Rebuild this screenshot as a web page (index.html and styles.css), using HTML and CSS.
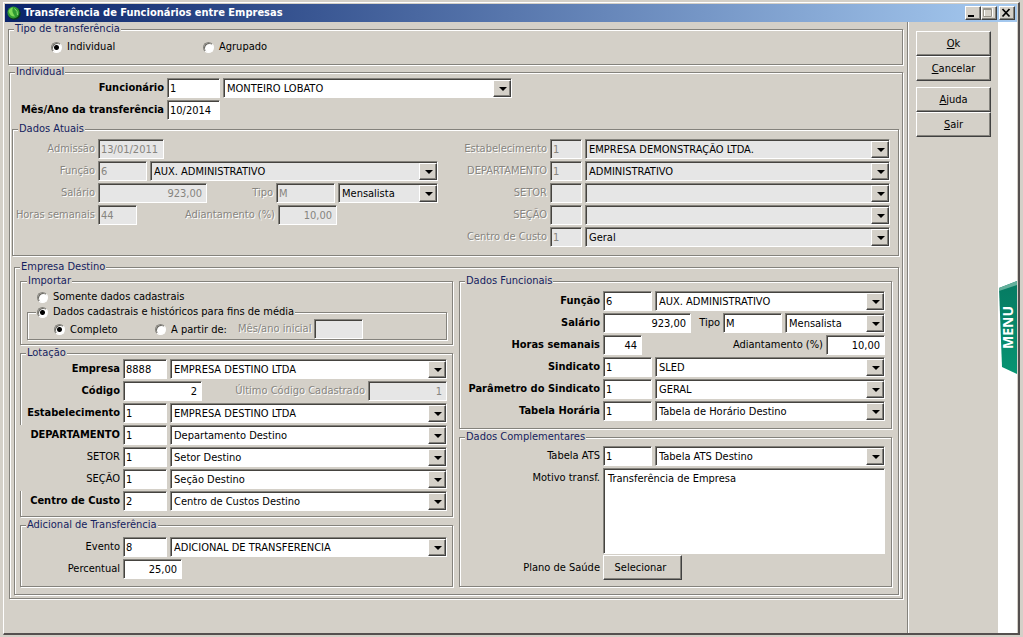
FILE: index.html
```
<!DOCTYPE html>
<html lang="pt-BR">
<head>
<meta charset="utf-8">
<title>Transferência de Funcionários entre Empresas</title>
<link rel="stylesheet" href="styles.css">
</head>
<body>
<div class="window">
  <header class="titlebar">
    <svg class="app-icon" viewBox="0 0 14 14" aria-hidden="true">
      <ellipse cx="7.400" cy="7.600" rx="6.400" ry="6.200" fill="#0b3b1c"/>
      <ellipse cx="6.400" cy="6.600" rx="6" ry="6" fill="#2f9a32"/>
      <path d="M1.500 5Q3 1.500 6 1.500Q4 5 8 10.500Q3 11 1.500 5Z" fill="#7ed957"/>
      <path d="M7.500 2.500Q11 5 10.500 9" fill="none" stroke="#8fdc74" stroke-width="1"/>
    </svg>
    <h1 class="title">Transferência de Funcionários entre Empresas</h1>
    <div class="window-buttons">
      <button class="winbtn" aria-label="Minimizar"><svg viewBox="0 0 12 10"><path d="M2 7h6v2H2z" fill="#000"/></svg></button>
      <button class="winbtn" aria-label="Maximizar"><svg viewBox="0 0 12 10"><path d="M2.500 .5h8v8h-8zM2.500 1.500h8" fill="none" stroke="#fff"/><path d="M1.500 .5h8v8h-8zM1.500 1.500h8" fill="none" stroke="#98958c"/></svg></button>
      <button class="winbtn close" aria-label="Fechar"><svg viewBox="0 0 12 10"><path d="M2.500 1l7 7.500M9.500 1l-7 7.500" stroke="#000" stroke-width="1.800"/></svg></button>
    </div>
  </header>
  <div class="body">
    <main class="form">
      <fieldset class="group tipo">
        <legend>Tipo de transferência</legend>
        <div class="options">
          <label class="radio first"><input type="radio" name="tipo" checked>Individual</label>
          <label class="radio"><input type="radio" name="tipo">Agrupado</label>
        </div>
      </fieldset>

      <fieldset class="group individual">
        <legend>Individual</legend>
        <div class="rows lab-xl top-rows">
          <div class="row"><label class="strong" for="func">Funcionário</label><input id="func" class="w-md" value="1"><span class="combo person"><select aria-label="Nome do funcionário"><option>MONTEIRO LOBATO</option></select></span></div>
          <div class="row"><label class="strong" for="mes">Mês/Ano da transferência</label><input id="mes" class="w-md" value="10/2014"></div>
        </div>

        <fieldset class="group atuais">
          <legend>Dados Atuais</legend>
          <div class="rows lab-sm">
            <div class="row"><label class="off" for="adm">Admissão</label><input id="adm" class="w-date" value="13/01/2011" disabled></div>
            <div class="row"><label class="off" for="fa">Função</label><input id="fa" class="w-code" value="6" disabled><span class="combo"><select disabled aria-label="Descrição da função"><option>AUX. ADMINISTRATIVO</option></select></span></div>
            <div class="row"><label class="off" for="sa">Salário</label><input id="sa" class="w-money-lg num" value="923,00" disabled><label class="off tail" for="ta">Tipo</label><input id="ta" class="w-type" value="M" disabled><span class="combo period"><select disabled aria-label="Tipo de salário"><option>Mensalista</option></select></span></div>
            <div class="row"><label class="off" for="ha">Horas semanais</label><input id="ha" class="w-hours" value="44" disabled><label class="off tail" for="aa">Adiantamento (%)</label><input id="aa" class="w-type num under-type" value="10,00" disabled></div>
          </div>
          <div class="rows lab-md">
            <div class="row"><label class="off" for="ea">Estabelecimento</label><input id="ea" class="w-tiny" value="1" disabled><span class="combo"><select disabled aria-label="Nome do estabelecimento"><option>EMPRESA DEMONSTRAÇÃO LTDA.</option></select></span></div>
            <div class="row"><label class="off" for="da">DEPARTAMENTO</label><input id="da" class="w-tiny" value="1" disabled><span class="combo"><select disabled aria-label="Nome do departamento"><option>ADMINISTRATIVO</option></select></span></div>
            <div class="row"><label class="off" for="sea">SETOR</label><input id="sea" class="w-tiny" disabled><span class="combo"><select disabled aria-label="Nome do setor"><option></option></select></span></div>
            <div class="row"><label class="off" for="sca">SEÇÃO</label><input id="sca" class="w-tiny" disabled><span class="combo"><select disabled aria-label="Nome da seção"><option></option></select></span></div>
            <div class="row"><label class="off" for="ca">Centro de Custo</label><input id="ca" class="w-tiny" value="1" disabled><span class="combo"><select disabled aria-label="Nome do centro de custo"><option>Geral</option></select></span></div>
          </div>
        </fieldset>

        <fieldset class="group destino">
          <legend>Empresa Destino</legend>
          <div class="column">
            <fieldset class="group importar">
              <legend>Importar</legend>
              <label class="radio"><input type="radio" name="importar">Somente dados cadastrais</label>
              <fieldset class="group historico">
                <legend><label class="radio"><input type="radio" name="importar" checked>Dados cadastrais e históricos para fins de média</label></legend>
                <div class="row">
                  <label class="radio full"><input type="radio" name="alcance" checked>Completo</label>
                  <label class="radio from"><input type="radio" name="alcance">A partir de:</label>
                  <label class="off" for="mi">Mês/ano inicial</label><input id="mi" class="w-code" disabled>
                </div>
              </fieldset>
            </fieldset>

            <fieldset class="group lotacao">
              <legend>Lotação</legend>
              <div class="rows lab-lg">
                <div class="row"><label class="strong" for="el">Empresa</label><input id="el" class="w-sm" value="8888"><span class="combo"><select aria-label="Nome da empresa"><option>EMPRESA DESTINO LTDA</option></select></span></div>
                <div class="row"><label class="strong" for="cl">Código</label><input id="cl" class="w-num num" value="2"><label class="off tail" for="ul">Último Código Cadastrado</label><input id="ul" class="w-num num" value="1" disabled></div>
                <div class="row"><label class="strong" for="esl">Estabelecimento</label><input id="esl" class="w-sm" value="1"><span class="combo"><select aria-label="Nome do estabelecimento de destino"><option>EMPRESA DESTINO LTDA</option></select></span></div>
                <div class="row"><label class="strong wide" for="dl">DEPARTAMENTO</label><input id="dl" class="w-sm" value="1"><span class="combo"><select aria-label="Nome do departamento de destino"><option>Departamento Destino</option></select></span></div>
                <div class="row"><label class="wide" for="stl">SETOR</label><input id="stl" class="w-sm" value="1"><span class="combo"><select aria-label="Nome do setor de destino"><option>Setor Destino</option></select></span></div>
                <div class="row"><label class="wide" for="scl">SEÇÃO</label><input id="scl" class="w-sm" value="1"><span class="combo"><select aria-label="Nome da seção de destino"><option>Seção Destino</option></select></span></div>
                <div class="row"><label class="strong" for="ccl">Centro de Custo</label><input id="ccl" class="w-sm" value="2"><span class="combo"><select aria-label="Nome do centro de custo de destino"><option>Centro de Custos Destino</option></select></span></div>
              </div>
            </fieldset>

            <fieldset class="group adicional">
              <legend>Adicional de Transferência</legend>
              <div class="rows lab-lg">
                <div class="row"><label for="ev">Evento</label><input id="ev" class="w-sm" value="8"><span class="combo"><select aria-label="Descrição do evento"><option>ADICIONAL DE TRANSFERENCIA</option></select></span></div>
                <div class="row"><label for="pe">Percentual</label><input id="pe" class="w-type num" value="25,00"></div>
              </div>
            </fieldset>
          </div>

          <div class="column">
            <fieldset class="group funcionais">
              <legend>Dados Funcionais</legend>
              <div class="rows lab-xl">
                <div class="row"><label class="strong" for="fd">Função</label><input id="fd" class="w-code" value="6"><span class="combo"><select aria-label="Descrição da nova função"><option>AUX. ADMINISTRATIVO</option></select></span></div>
                <div class="row"><label class="strong" for="sd">Salário</label><input id="sd" class="w-money num" value="923,00"><label class="tail" for="td">Tipo</label><input id="td" class="w-type" value="M"><span class="combo period"><select aria-label="Novo tipo de salário"><option>Mensalista</option></select></span></div>
                <div class="row"><label class="strong" for="hd">Horas semanais</label><input id="hd" class="w-hours num" value="44"><label class="tail" for="ad">Adiantamento (%)</label><input id="ad" class="w-type num" value="10,00"></div>
                <div class="row"><label class="strong" for="si">Sindicato</label><input id="si" class="w-code" value="1"><span class="combo"><select aria-label="Nome do sindicato"><option>SLED</option></select></span></div>
                <div class="row"><label class="strong" for="ps">Parâmetro do Sindicato</label><input id="ps" class="w-code" value="1"><span class="combo"><select aria-label="Nome do parâmetro"><option>GERAL</option></select></span></div>
                <div class="row"><label class="strong" for="th">Tabela Horária</label><input id="th" class="w-code" value="1"><span class="combo"><select aria-label="Nome da tabela horária"><option>Tabela de Horário Destino</option></select></span></div>
              </div>
            </fieldset>

            <fieldset class="group complementares">
              <legend>Dados Complementares</legend>
              <div class="rows lab-xl">
                <div class="row"><label for="ats">Tabela ATS</label><input id="ats" class="w-code" value="1"><span class="combo"><select aria-label="Nome da tabela ATS"><option>Tabela ATS Destino</option></select></span></div>
                <div class="row memo"><label for="mo">Motivo transf.</label><textarea id="mo">Transferência de Empresa</textarea></div>
                <div class="row action"><label for="pl">Plano de Saúde</label><button id="pl" class="btn select-btn">Selecionar</button></div>
              </div>
            </fieldset>
          </div>
        </fieldset>
      </fieldset>
    </main>

    <aside class="side">
      <div class="btn-pair">
        <button class="btn"><span><u>O</u>k</span></button>
        <button class="btn"><span><u>C</u>ancelar</span></button>
      </div>
      <div class="btn-pair">
        <button class="btn"><span><u>A</u>juda</span></button>
        <button class="btn"><span><u>S</u>air</span></button>
      </div>
    </aside>

    <nav class="strip">
      <button class="menu-tab">
        <svg viewBox="0 0 18 93" preserveAspectRatio="none" aria-hidden="true">
          <defs><linearGradient id="teal" x1="0" y1="0" x2="0" y2="1"><stop offset="0" stop-color="#067a62"/><stop offset="1" stop-color="#079472"/></linearGradient></defs>
          <path d="M0 7L18 0V93L3 86Z" fill="url(#teal)"/>
          <path d="M0 7L18 0V4L0 10Z" fill="#64b09c"/>
        </svg>
        <span>MENU</span>
      </button>
    </nav>
  </div>
</div>
</body>
</html>
```
FILE: styles.css
```
:root {
  --face: #d4d0c8;
  --shade: #84827c;
  --dark: #45433f;
  --navy: #14225f;
  --off: #878580;
}

* { box-sizing: border-box; }

body {
  margin: 0;
  background: var(--face);
  color: #000;
  font: 11px/14px "DejaVu Sans Condensed", "DejaVu Sans", sans-serif;
}

button, input, select, textarea { font: inherit; color: inherit; margin: 0; border-radius: 0; }

/* window frame */
.window {
  display: flex;
  flex-direction: column;
  min-height: calc(100vh - 4px);
  margin: 2px 3px 2px 3px;
  padding: 1px 1px 0 1px;
  border: solid;
  border-width: 1px 2px 2px 1px;
  border-color: #fff #55504f #55504f #fff;
}

.titlebar {
  display: flex;
  align-items: center;
  height: 18px;
  padding: 0 2px 0 2px;
  background: linear-gradient(90deg, #0a246a, #a6caf0);
}

.app-icon { width: 14px; height: 14px; margin-right: 3px; }

.title { flex: 1; margin: 0; color: #fff; font-size: 11px; line-height: 14px; font-weight: bold; }

.window-buttons { display: flex; }

.winbtn {
  width: 16px;
  height: 14px;
  padding: 0;
  background: var(--face);
  border: 1px solid;
  border-color: #fff #404040 #404040 #fff;
  box-shadow: inset -1px -1px 0 var(--shade);
}

.winbtn svg { display: block; width: 12px; height: 10px; }
.winbtn.close { margin-left: 2px; }

.body { flex: 1; display: flex; }

.form { flex: 1; min-width: 0; padding: 1px 4px 4px 3px; }

/* group boxes */
.group {
  min-width: 0;
  margin: 0;
  padding: 0;
  border: 1px solid var(--shade);
  box-shadow: inset 1px 1px 0 #fff, 1px 1px 0 #fff;
}

.group > legend {
  height: 12px;
  margin-left: 5px;
  padding: 0 1px;
  background: var(--face);
  color: var(--navy);
  line-height: 12px;
}

.tipo { padding: 5px 0 10px; }
.options { display: flex; padding-left: 42px; }
.options .first { width: 152px; }

.individual { margin: 1px 0 0 1px; padding: 0 3px 3px 2px; }
.individual > legend { margin-left: 3px; }
.top-rows { width: 501px; padding-left: 2px; }
.person { max-width: 289px; }

.atuais {
  display: grid;
  grid-template-columns: minmax(0, 425fr) minmax(0, 433fr);
  gap: 19px;
  margin-top: 3px;
  padding: 4px 8px 8px 0;
}

.destino {
  display: grid;
  grid-template-columns: minmax(0, 1fr) minmax(0, 1fr);
  gap: 6px;
  margin: 5px 0 0 2px;
  padding: 2px 6px 7px 5px;
}

.destino > legend, .importar > legend { margin-left: 0; }

.column { display: flex; flex-direction: column; gap: 2px; }

.importar { padding: 3px 5px 4px 6px; }
.importar > .radio { padding-left: 10px; }
.historico { margin-top: 2px; padding: 1px 0 0; }
.group.historico > legend { margin-left: 8px; color: #000; }
.historico .radio { height: 12px; }
.historico .row .radio { height: 20px; }
.historico .full { width: 98px; margin-left: 26px; }
.historico .from { width: 80px; }

.lotacao { padding: 0 5px 5px 0; }
.adicional { padding: 6px 5px 7px 0; }
.funcionais { padding: 4px 6px 7px 0; }
.complementares { padding: 3px 6px 6px 0; }

/* rows */
.rows { display: flex; flex-direction: column; gap: 2px; }
.row { display: flex; gap: 3px; min-height: 20px; }
.row > label { line-height: 19px; white-space: nowrap; }
.rows .row > label:first-child { flex: none; text-align: right; }
.lab-sm .row > label:first-child { width: 82px; }
.lab-md .row > label:first-child { width: 90px; }
.lab-lg .row > label:first-child { width: 99px; }
.lab-xl .row > label:first-child { width: 140px; }
.top-rows .row > label:first-child { width: 150px; }
.row > .tail { flex: 1; text-align: right; }
.strong { font-weight: bold; }
.off { color: var(--off); text-shadow: 1px 1px 0 #fff; }

/* long captions that run over the group border */
.lab-lg .row > .wide:first-child {
  width: 102px;
  height: 22px;
  margin: 0 0 -2px -3px;
  background: var(--face);
  z-index: 1;
}

/* text boxes and combos */
.row > input, select, textarea {
  height: 20px;
  padding: 0 2px;
  background: #fff;
  border: 1px solid;
  border-color: var(--shade) #fff #fff var(--shade);
  box-shadow: inset 1px 1px 0 var(--dark);
  outline: 0;
}

.row > input { flex: none; }
.row > input:disabled { background: #e6e6e6; color: var(--off); }
.num { text-align: right; }
.row > .num { padding-right: 4px; }

.w-tiny { width: 32px; }
.w-hours { width: 39px; }
.w-sm { width: 44px; }
.w-code { width: 49px; }
.w-md { width: 53px; }
.w-type { width: 59px; }
.w-date { width: 66px; }
.w-num { width: 79px; }
.w-money { width: 88px; }
.w-money-lg { width: 109px; }
.under-type { margin-right: 101px; }

.combo { position: relative; flex: 1; min-width: 0; }
.row > .period { flex: none; width: 100px; }

select {
  display: block;
  width: 100%;
  padding: 1px 18px 0 3px;
  appearance: none;
}

select:disabled { background: #e6e6e6; color: #000; opacity: 1; }

.combo::before {
  content: "";
  position: absolute;
  top: 2px;
  right: 1px;
  bottom: 1px;
  width: 16px;
  background: var(--face);
  border: 1px solid;
  border-color: #fff #404040 #404040 #fff;
  box-shadow: inset -1px -1px 0 var(--shade);
  pointer-events: none;
}

.combo::after {
  content: "";
  position: absolute;
  top: 9px;
  right: 5px;
  border: 4px solid transparent;
  border-top-color: #000;
  border-bottom: 0;
  pointer-events: none;
}

textarea { flex: 1; min-width: 0; height: 86px; padding: 3px 4px; resize: none; }
.action { margin-top: -1px; }
.action > label { padding-top: 3px; }

/* radios */
.radio { display: flex; align-items: center; gap: 5px; height: 14px; white-space: nowrap; }

.radio input {
  flex: none;
  width: 11px;
  height: 11px;
  appearance: none;
  border: 1px solid;
  border-color: var(--shade) #fff #fff var(--shade);
  border-radius: 50%;
  background: #fff;
  box-shadow: inset 1px 1px 0 #6b6963;
}

.radio input:checked { background: radial-gradient(circle, #000 2px, #fff 3px); }

/* buttons */
.btn {
  height: 25px;
  padding: 0;
  background: var(--face);
  border: 1px solid;
  border-color: #fff #404040 #404040 #fff;
  box-shadow: inset -1px -1px 0 var(--shade);
}

.select-btn { width: 79px; padding-right: 4px; }

.side {
  display: flex;
  flex-direction: column;
  gap: 6px;
  width: 91px;
  padding: 9px 7px 0 8px;
  border-left: 1px solid var(--shade);
  box-shadow: inset 1px 0 0 #fff;
}

.btn-pair { display: flex; flex-direction: column; }

/* white strip with the menu tab */
.strip { display: flex; flex-direction: column; align-items: flex-end; width: 19px; padding-top: 259px; background: #fff; }

.menu-tab {
  display: grid;
  place-items: center;
  width: 18px;
  height: 93px;
  padding: 0;
  border: 0;
  background: none;
  color: #fff;
  font: bold 14px/14px "Open Sans", sans-serif;
}

.menu-tab > * { grid-area: 1 / 1; }
.menu-tab svg { width: 18px; height: 93px; }
.menu-tab span { writing-mode: vertical-rl; transform: rotate(180deg); }
```
